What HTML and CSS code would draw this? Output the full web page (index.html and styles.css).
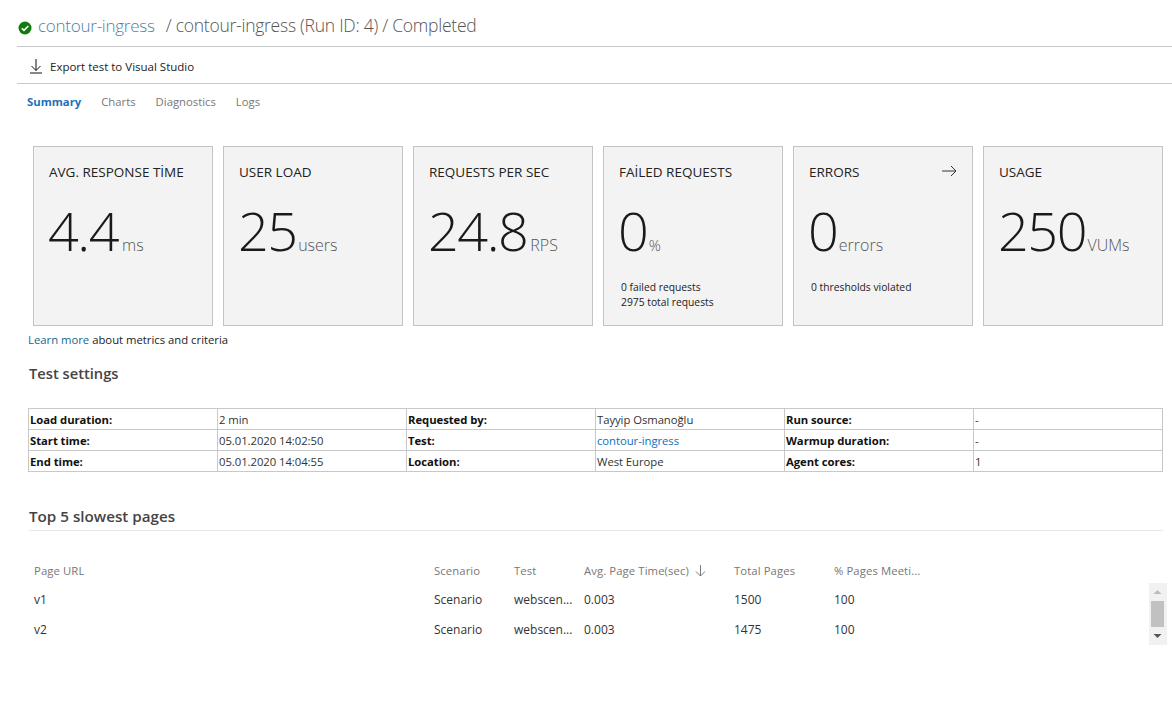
FILE: index.html
```html
<!DOCTYPE html>
<html lang="en">
<head>
<meta charset="utf-8">
<title>contour-ingress</title>
<link rel="stylesheet" href="styles.css">
</head>
<body>
<header class="title-bar">
  <svg class="status" width="14" height="14" viewBox="0 0 14 14"><circle cx="7" cy="7" r="6.5" fill="#107c10"/><path d="M3.8 7.2 6 9.4 10.3 5" fill="none" stroke="#fff" stroke-width="1.6"/></svg>
  <a class="title-link">contour-ingress</a>
  <span class="title-rest">/ contour-ingress (Run ID: 4) / Completed</span>
</header>
<div class="toolbar">
  <svg width="14" height="16" viewBox="0 0 14 16"><path d="M7 1v11.5M2.5 8 7 12.5 11.5 8M1 15h12" fill="none" stroke="#111" stroke-width="1"/></svg>
  <span>Export test to Visual Studio</span>
</div>
<nav class="tabs">
  <span class="tab active">Summary</span>
  <span class="tab">Charts</span>
  <span class="tab">Diagnostics</span>
  <span class="tab">Logs</span>
</nav>
<section class="cards">
  <div class="card">
    <div class="card-title">AVG. RESPONSE TİME</div>
    <div class="metric"><span class="num">4.4</span><span class="unit unit-ms">ms</span></div>
  </div>
  <div class="card">
    <div class="card-title">USER LOAD</div>
    <div class="metric"><span class="num">25</span><span class="unit">users</span></div>
  </div>
  <div class="card">
    <div class="card-title">REQUESTS PER SEC</div>
    <div class="metric"><span class="num">24.8</span><span class="unit unit-rps">RPS</span></div>
  </div>
  <div class="card">
    <div class="card-title">FAİLED REQUESTS</div>
    <div class="metric"><span class="num">0</span><span class="unit unit-pct">%</span></div>
    <div class="note">0 failed requests<br>2975 total requests</div>
  </div>
  <div class="card">
    <div class="card-title">ERRORS</div>
    <svg class="arrow" width="15" height="12" viewBox="0 0 15 12"><path d="M0 6h14M9 1l5 5-5 5" fill="none" stroke="#333" stroke-width="1"/></svg>
    <div class="metric"><span class="num">0</span><span class="unit">errors</span></div>
    <div class="note">0 thresholds violated</div>
  </div>
  <div class="card">
    <div class="card-title">USAGE</div>
    <div class="metric"><span class="num">250</span><span class="unit">VUMs</span></div>
  </div>
</section>
<p class="learn"><a class="link">Learn more</a> about metrics and criteria</p>
<h2 class="settings-head">Test settings</h2>
<table class="settings">
  <tr><th>Load duration:</th><td>2 min</td><th>Requested by:</th><td>Tayyip Osmanoğlu</td><th>Run source:</th><td>-</td></tr>
  <tr><th>Start time:</th><td>05.01.2020 14:02:50</td><th>Test:</th><td><a class="link">contour-ingress</a></td><th>Warmup duration:</th><td>-</td></tr>
  <tr><th>End time:</th><td>05.01.2020 14:04:55</td><th>Location:</th><td>West Europe</td><th>Agent cores:</th><td>1</td></tr>
</table>
<h2 class="slow-head">Top 5 slowest pages</h2>
<section class="slow">
  <div class="grid">
    <div class="row head"><span>Page URL</span><span>Scenario</span><span>Test</span><span class="sort">Avg. Page Time(sec)<svg width="11" height="12" viewBox="0 0 11 12"><path d="M5.5 0v11M1 6.5l4.5 4.5L10 6.5" fill="none" stroke="#777" stroke-width="1"/></svg></span><span>Total Pages</span><span>% Pages Meeti...</span></div>
    <div class="row"><span>v1</span><span>Scenario</span><span>webscen...</span><span>0.003</span><span>1500</span><span>100</span></div>
    <div class="row"><span>v2</span><span>Scenario</span><span>webscen...</span><span>0.003</span><span>1475</span><span>100</span></div>
  </div>
  <div class="scrollbar">
    <svg width="13" height="18" viewBox="0 0 13 18"><path d="M2.5 11 6.5 7l4 4z" fill="#bbb"/></svg>
    <div class="thumb"></div>
    <svg width="13" height="18" viewBox="0 0 13 18"><path d="M2.5 7l4 4 4-4z" fill="#555"/></svg>
  </div>
</section>
</body>
</html>
```
FILE: styles.css
```css
* { box-sizing: border-box; }
html, body { margin: 0; padding: 0; }
body {
  width: 1172px;
  height: 703px;
  overflow: hidden;
  background: #fff;
  color: #222;
  font-family: "Open Sans", "Liberation Sans", sans-serif;
  font-size: 11px;
}
.title-bar {
  margin-left: 17px;
  height: 47px;
  padding: 14px 0 0 1px;
  border-bottom: 1px solid #c8c8c8;
  display: flex;
  align-items: baseline;
  font-size: 17.5px;
  font-weight: 300;
  line-height: 22px;
  letter-spacing: -0.25px;
  color: #555;
}
.status { margin-right: 6px; flex: none; align-self: flex-start; margin-top: 7px; }
.title-link { color: #4c7fa8; margin-right: 11px; font-size: 17px; }
.toolbar {
  margin-left: 17px;
  height: 37px;
  border-bottom: 1px solid #c8c8c8;
  display: flex;
  align-items: center;
  gap: 7px;
  padding: 2px 0 0 12px;
  font-size: 11.5px;
  color: #222;
}
.tabs {
  display: flex;
  gap: 20px;
  padding: 10px 0 0 27px;
  height: 62px;
  font-size: 11.3px;
  color: #777;
  line-height: 16px;
}
.tab.active { color: #1f6fb8; font-weight: 700; }
.cards {
  display: flex;
  gap: 10px;
  padding-left: 33px;
}
.card {
  position: relative;
  width: 180px;
  height: 180px;
  flex: none;
  background: #f3f3f3;
  border: 1px solid #c4c4c4;
  padding: 16px 15px 0;
}
.card-title {
  font-size: 13.5px;
  line-height: 18px;
  color: #222;
}
.arrow { position: absolute; top: 18px; right: 15px; }
.metric {
  margin-top: 14px;
  height: 70px;
  display: flex;
  align-items: baseline;
  line-height: 70px;
  white-space: nowrap;
}
.num {
  font-size: 54px;
  font-weight: 300;
  color: #1a1a1a;
  letter-spacing: -1.5px;
  margin-left: -1px;
}
.unit {
  font-size: 16px;
  font-weight: 300;
  color: #555;
  margin-left: 1.5px;
}
.unit-ms { margin-left: 4px; }
.unit-rps { margin-left: 3px; }
.unit-pct { font-size: 15px; }
.note {
  margin: 15px 0 0 2px;
  font-size: 10.3px;
  line-height: 15px;
  color: #222;
}
.learn {
  margin: 6px 0 0 28px;
  font-size: 11.3px;
  line-height: 16px;
}
.link { color: #106ebe; }
.learn .link { color: #16688f; }
.settings-head, .slow-head {
  font-weight: 600;
  color: #444;
  margin: 0;
}
.settings-head { margin: 15px 0 0 29px; font-size: 14.7px; line-height: 20px; }
.settings {
  margin: 25px 0 0 28px;
  width: 1135px;
  table-layout: fixed;
  border-collapse: collapse;
  font-size: 11.3px;
  letter-spacing: -0.05px;
}
.settings th, .settings td {
  border: 1px solid #c8c8c8;
  height: 21px;
  padding: 2px 0 0 1px;
  text-align: left;
  white-space: nowrap;
  line-height: 18px;
}
.settings th { font-weight: 700; color: #111; }
.settings td { font-weight: 400; color: #333; }
.slow-head {
  margin: 34px 9px 0 29px;
  height: 25px;
  font-size: 15.2px;
  font-weight: 600;
  line-height: 20px;
  border-bottom: 1px solid #e8e8e8;
}
.slow {
  position: relative;
  margin: 24px 0 0 34px;
}
.row {
  display: grid;
  grid-template-columns: 400px 80px 70px 150px 100px 120px;
  height: 30px;
  align-items: center;
  font-size: 12px;
  color: #333;
  white-space: nowrap;
}
.row.head { height: 29px; padding-top: 2px; color: #777; font-size: 11.3px; letter-spacing: 0.1px; }
.sort { display: flex; align-items: center; gap: 6px; }
.scrollbar {
  position: absolute;
  left: 1115px;
  top: 28px;
  width: 18px;
  height: 62px;
  padding: 0 3px 0 2px;
  background: #f1f1f1;
  display: flex;
  flex-direction: column;
}
.thumb { flex: 1; background: #c1c1c1; }
```
